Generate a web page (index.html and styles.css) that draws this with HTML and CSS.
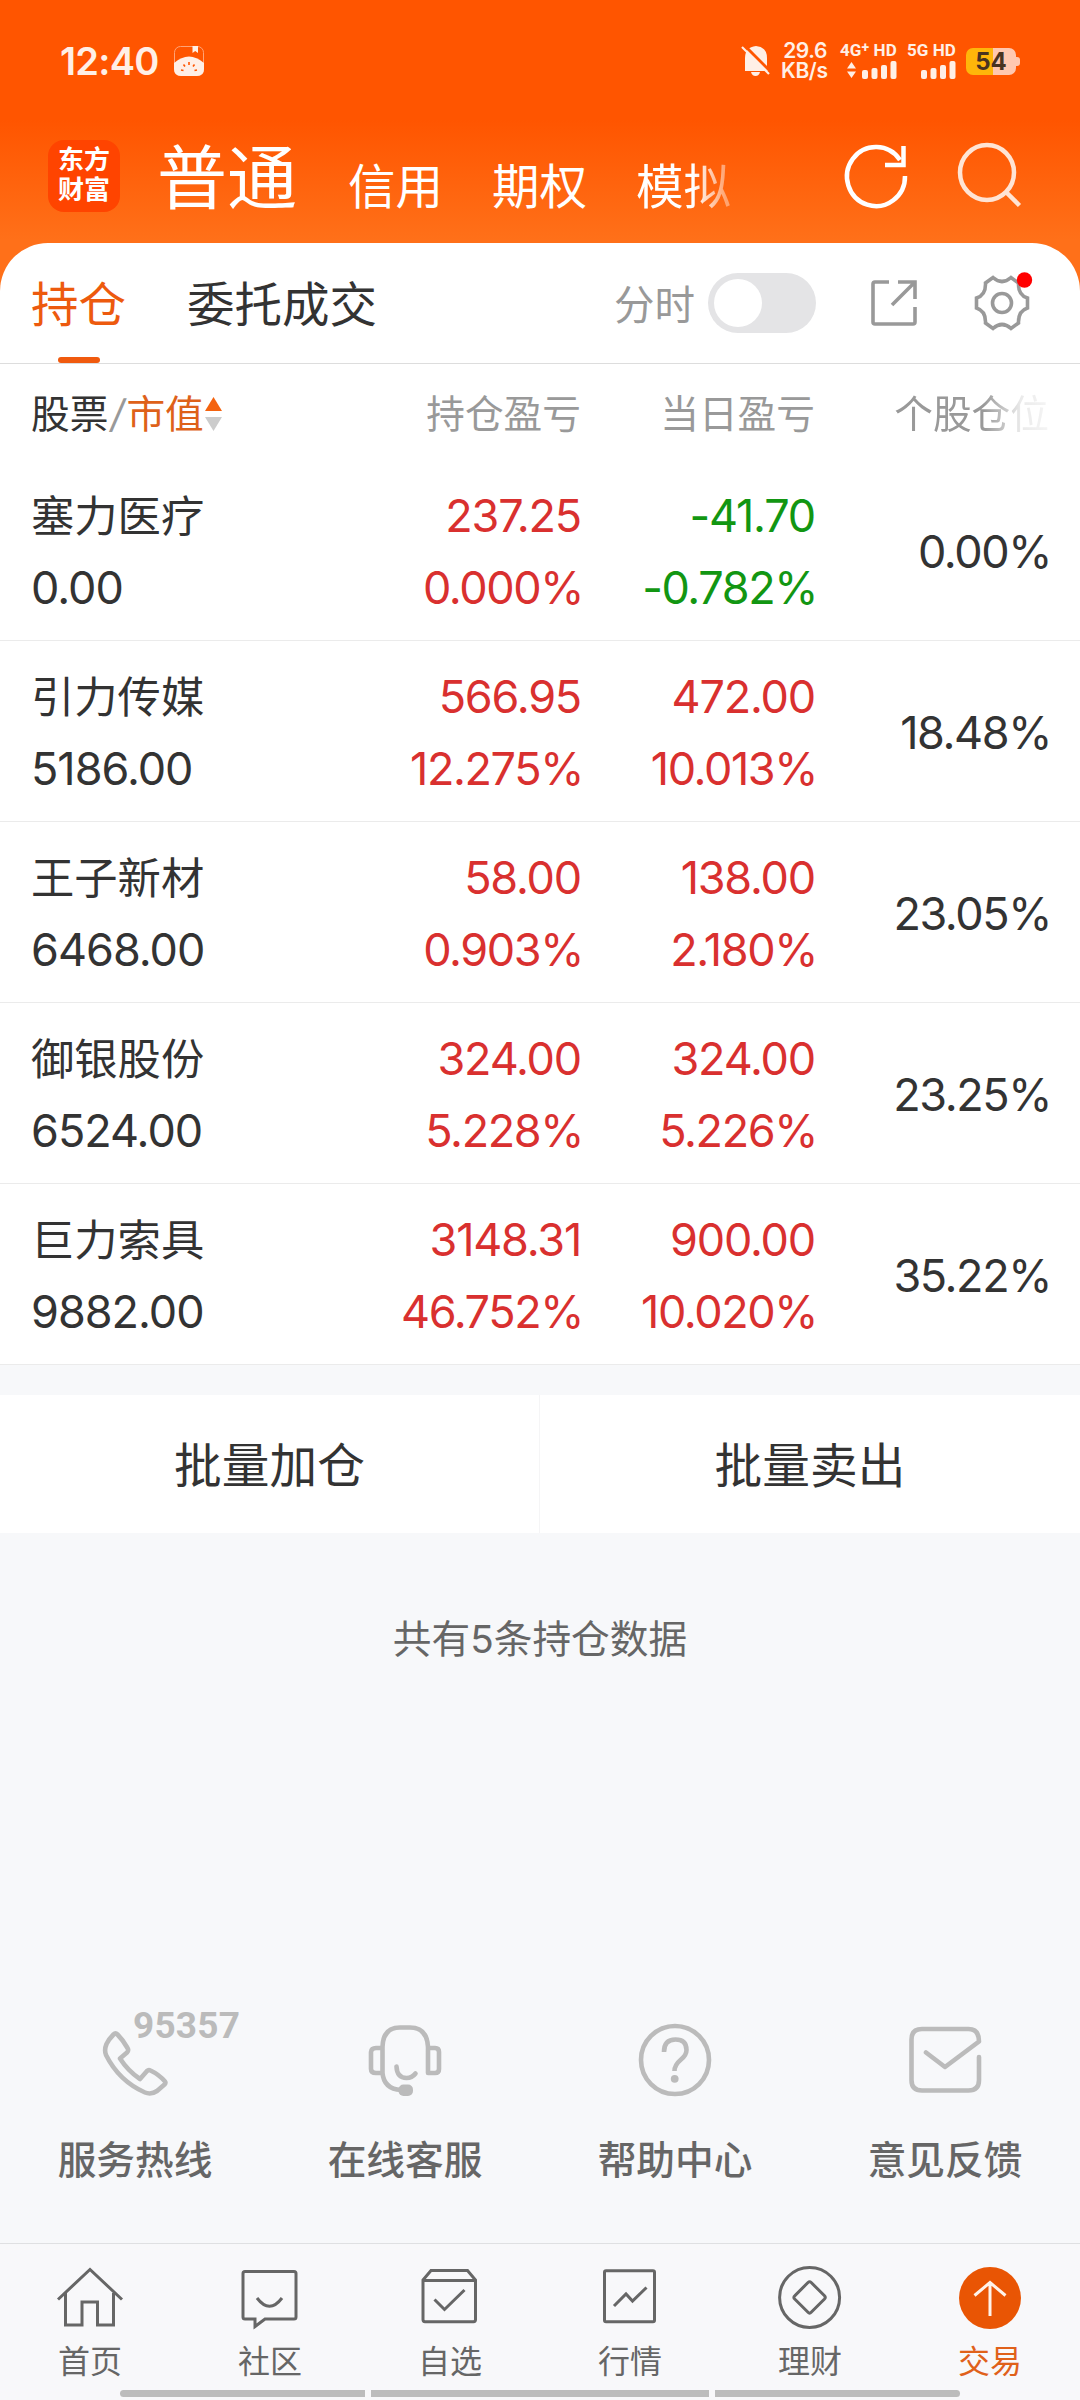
FILE: index.html
```html
<!DOCTYPE html>
<html lang="zh-CN">

<head>
    <meta charset="UTF-8">
    <meta name="viewport" content="width=device-width, initial-scale=1.0">
    <title>交易 - 持仓</title>
    <link rel="stylesheet" href="styles.css">
</head>

<body>
    <header class="header">
        <div class="status">
            <span class="time">12:40</span>
            <svg class="app-icon" width="30" height="30" viewBox="0 0 30 30">
                <rect x=".5" y=".5" width="29" height="29" rx="6" fill="none" stroke="#ffa377" />
                <path d="M0 17Q15 4 30 17V23Q30 30 23 30H7Q0 30 0 23Z" fill="#ffefe6" />
                <path d="M18.500 0H24V7L21.200 5L18.500 7Z" fill="#ffefe6" />
                <path d="M15 16V19M9.500 18.500L11 20.500M20.500 18.500L19 20.500M7 24L9.500 24.500M23 24L20.500 24.500" stroke="#ff5500" stroke-width="1.600" />
            </svg>
            <div class="status-right">
                <svg class="bell" width="28" height="32" viewBox="0 0 28 32">
                    <path d="M3 26V13Q3 2 14 1Q25 2 25 13V22L27 26Z" fill="#ffefe6" />
                    <path d="M9 27H18Q17 31 13.500 31Q10 31 9 27Z" fill="#ffefe6" />
                    <path d="M2 0L29 27" stroke="#ff5500" stroke-width="3" />
                    <path d="M0 2L27 29" stroke="#ffefe6" stroke-width="2.200" />
                </svg>
                <div class="speed">29.6<br>KB/s</div>
                <div class="signal">
                    <span>4G<sup>+</sup> HD</span>
                    <svg width="53" height="18" viewBox="0 0 53 18">
                        <path d="M3 7.500L7.500 1L12 7.500ZM3 10.500L7.500 17L12 10.500Z" />
                        <rect x="18" y="9" width="6" height="9" rx="2" />
                        <rect x="27.500" y="7" width="6" height="11" rx="2" />
                        <rect x="37" y="4" width="6" height="14" rx="2" />
                        <rect x="46.500" y="0" width="6" height="18" rx="2" />
                    </svg>
                </div>
                <div class="signal">
                    <span>5G HD</span>
                    <svg width="35" height="18" viewBox="0 0 35 18">
                        <rect x="0" y="9" width="6" height="9" rx="2" />
                        <rect x="9.500" y="7" width="6" height="11" rx="2" />
                        <rect x="19" y="4" width="6" height="14" rx="2" />
                        <rect x="28.500" y="0" width="6" height="18" rx="2" />
                    </svg>
                </div>
                <div class="battery"><span>54</span></div>
            </div>
        </div>
        <div class="topbar">
            <div class="logo">东方<br>财富</div>
            <nav class="account">
                <a class="on">普通</a>
                <a>信用</a>
                <a>期权</a>
                <a class="fade">模拟</a>
            </nav>
            <svg class="refresh" width="66" height="70" viewBox="0 0 66 70">
                <path d="M62 35A29 29.500 0 1 1 57 19" />
                <path d="M60.500 5V24H42" />
            </svg>
            <svg class="search" width="66" height="70" viewBox="0 0 66 70">
                <ellipse cx="31" cy="31.500" rx="27" ry="27.500" />
                <path d="M49.500 50.500L63.500 64.500" />
            </svg>
        </div>
    </header>

    <main class="panel">
        <div class="tabs">
            <a class="tab on">持仓</a>
            <a class="tab">委托成交</a>
            <div class="tools">
                <span>分时</span>
                <i class="switch"></i>
                <svg class="share" width="48" height="48" viewBox="0 0 48 48">
                    <path d="M19 3H5Q3 3 3 5V43Q3 45 5 45H43Q45 45 45 43V28M28 3H45V20M22 26L45 3" />
                </svg>
                <svg class="gear" width="60" height="60" viewBox="-30 -30 60 60">
                    <path d="M-9 -25.500Q0 -17.500 9 -25.500L16.500 -20Q16 -8 25.500 -5V5Q16 8 16.500 20L9 25.500Q0 17.500 -9 25.500L-16.500 20Q-16 8 -25.500 5V-5Q-16 -8 -16.500 -20Z" />
                    <circle r="9.500" />
                    <circle class="dot" cx="22.500" cy="-23" r="7.700" />
                </svg>
            </div>
        </div>

        <div class="row head">
            <div class="name">股票<em>/</em><b>市值</b><svg width="17" height="36" viewBox="0 0 17 36"><path d="M0 15L8.500 1L17 15Z" fill="#f4630f" /><path d="M0 21L8.500 35L17 21Z" fill="#ccc" /></svg></div>
            <div>持仓盈亏</div>
            <div>当日盈亏</div>
            <div class="fade">个股仓位</div>
        </div>
        <div class="row">
            <div class="name">塞力医疗<span>0.00</span></div>
            <div class="up"><span>237.25</span><span class="rate">0.000%</span></div>
            <div class="down"><span>-41.70</span><span class="rate">-0.782%</span></div>
            <div><span class="rate">0.00%</span></div>
        </div>
        <div class="row">
            <div class="name">引力传媒<span>5186.00</span></div>
            <div class="up"><span>566.95</span><span class="rate">12.275%</span></div>
            <div class="up"><span>472.00</span><span class="rate">10.013%</span></div>
            <div><span class="rate">18.48%</span></div>
        </div>
        <div class="row">
            <div class="name">王子新材<span>6468.00</span></div>
            <div class="up"><span>58.00</span><span class="rate">0.903%</span></div>
            <div class="up"><span>138.00</span><span class="rate">2.180%</span></div>
            <div><span class="rate">23.05%</span></div>
        </div>
        <div class="row">
            <div class="name">御银股份<span>6524.00</span></div>
            <div class="up"><span>324.00</span><span class="rate">5.228%</span></div>
            <div class="up"><span>324.00</span><span class="rate">5.226%</span></div>
            <div><span class="rate">23.25%</span></div>
        </div>
        <div class="row">
            <div class="name">巨力索具<span>9882.00</span></div>
            <div class="up"><span>3148.31</span><span class="rate">46.752%</span></div>
            <div class="up"><span>900.00</span><span class="rate">10.020%</span></div>
            <div><span class="rate">35.22%</span></div>
        </div>
    </main>

    <div class="batch">
        <a>批量加仓</a>
        <a>批量卖出</a>
    </div>
    <p class="total">共有5条持仓数据</p>

    <div class="service">
        <a>
            <svg width="80" height="80" viewBox="0 0 80 80">
                <path d="M18.500 14.500Q20.500 12.500 22.500 14.500Q28 20 32.500 28Q34 30.500 32 32.500L25 38.500Q33 51 45 59L52 51Q53.500 49.500 55.500 50.500Q64 54.500 70 61.500Q71 63 69.500 64.500L62 71Q56 75 50 72.500Q24 61 11 35Q9 30 11.500 24Q14 19 18.500 14.500Z" />
            </svg>
            <strong>95357</strong>
            服务热线
        </a>
        <a>
            <svg width="80" height="80" viewBox="0 0 80 80">
                <path d="M17.500 53V27Q18 7.500 35 7.500H45Q62 7.500 63 27V53H70Q74 53 74 49V32Q74 28 70 28H63M17.500 28H11Q6 28 6 32V49Q6 53 11 53H17.500Q19 69 36 70" />
                <path d="M31.500 46.500Q32 58 41.500 58Q47 58 50.500 53.500" />
                <rect class="fill" x="33.500" y="64.500" width="14.500" height="11.500" rx="5" />
            </svg>
            在线客服
        </a>
        <a>
            <svg width="80" height="80" viewBox="0 0 80 80">
                <circle cx="40" cy="40" r="34" />
                <path class="butt" d="M29 32Q29 19.500 40.500 19.500Q51.500 19.500 51.500 30Q51.500 35 46 39.500Q39.500 45 39.500 51" />
                <circle class="fill" cx="39.700" cy="58.800" r="3.900" />
            </svg>
            帮助中心
        </a>
        <a>
            <svg width="80" height="80" viewBox="0 0 80 80">
                <path d="M74 37V60Q74 70.500 63.500 70.500H17Q6.500 70.500 6.500 60V19.500Q6.500 9 17 9H63.500Q74 9 74 21.500L40 47L21 32.500" />
            </svg>
            意见反馈
        </a>
    </div>

    <footer class="tabbar">
        <a>
            <svg width="80" height="80" viewBox="0 0 80 80">
                <path d="M8 39.500L40 9.500L72 39.500M15.500 33V65H32V42H47.500V65H63.500V33" />
            </svg>
            首页
        </a>
        <a>
            <svg width="80" height="80" viewBox="0 0 80 80">
                <path d="M15 11.500H64Q66 11.500 66 13.500V57Q66 59 64 59H35L25 66.500V59H15Q13 59 13 57V13.500Q13 11.500 15 11.500ZM27 38Q39.500 54.500 52 38" />
            </svg>
            社区
        </a>
        <a>
            <svg width="80" height="80" viewBox="0 0 80 80">
                <path d="M13 20L21 10.500H57.500L65.500 20V59.500Q65.500 61.700 63.500 61.700H15Q13 61.700 13 59.500ZM13 20.500H65.500M24.500 39.500L34.500 49.500L54.500 30" />
            </svg>
            自选
        </a>
        <a>
            <svg width="80" height="80" viewBox="0 0 80 80">
                <rect x="14.500" y="10.700" width="50" height="51" rx="1.500" />
                <path d="M24 46L36 34L42.500 41L56.500 27.500" />
            </svg>
            行情
        </a>
        <a>
            <svg width="80" height="80" viewBox="0 0 80 80">
                <circle cx="39.600" cy="37.400" r="30" />
                <path d="M38 22.500Q39.600 21 41.200 22.500L54.500 35.800Q56 37.400 54.500 39L41.200 52.300Q39.600 54 38 52.300L24.700 39Q23 37.400 24.700 35.800Z" />
            </svg>
            理财
        </a>
        <a class="on">
            <svg width="80" height="80" viewBox="0 0 80 80">
                <circle class="disc" cx="40" cy="38" r="31" />
                <path d="M40 56V22M24.500 35.500L40 22.500L55.500 35.500" />
            </svg>
            交易
        </a>
        <div class="handle"><i></i><i></i><i></i></div>
    </footer>
</body>

</html>
```

FILE: styles.css
```css
* {
    box-sizing: border-box;
}

body {
    display: flex;
    flex-direction: column;
    margin: 0;
    width: 1080px;
    height: 2400px;
    overflow: hidden;
    font-family: Inter, "Noto Sans CJK SC", sans-serif;
    color: #333;
    background-color: #f7f8fa;
}

svg {
    display: block;
    flex: none;
    overflow: visible;
    fill: none;
}

/* header */
.header {
    height: 300px;
    flex: none;
    background: linear-gradient(#ff5500 0, #ff5500 120px, #ff7019 240px);
}

.status {
    display: flex;
    align-items: center;
    height: 122px;
    padding: 0 60px;
    color: #ffefe6;
}

.time {
    width: 114px;
    font-size: 38px;
    font-weight: 600;
    letter-spacing: -0.7px;
    white-space: nowrap;
}

.status-right {
    display: flex;
    align-items: center;
    margin-left: auto;
}

.speed {
    width: 46px;
    margin: 0 13px 0 11px;
    font-size: 21px;
    font-weight: 600;
    line-height: 20px;
    letter-spacing: -0.4px;
    text-align: right;
    white-space: nowrap;
}

.signal {
    display: flex;
    flex-direction: column;
    align-items: flex-end;
    gap: 3px;
    margin-right: 10px;
    font-family: Roboto, sans-serif;
    font-size: 17px;
    font-weight: 700;
    line-height: 15px;
    letter-spacing: 0.1px;
    white-space: nowrap;
}

.signal sup {
    font-size: 14px;
    line-height: 0;
    vertical-align: 4px;
}

.signal svg {
    fill: #ffefe6;
}

.battery {
    position: relative;
    width: 50px;
    height: 27px;
    margin-right: 4px;
    border-radius: 7px;
    font-size: 24px;
    font-weight: 700;
    line-height: 27px;
    text-align: center;
    color: #4a3320;
    background: linear-gradient(90deg, #ffb60a 54%, #ffc8b0 54%);
}

.battery::after {
    content: "";
    position: absolute;
    right: -4px;
    top: 9px;
    width: 4px;
    height: 9px;
    border-radius: 0 3px 3px 0;
    background-color: #ffc8b0;
}

.topbar {
    display: flex;
    align-items: center;
    height: 107px;
    padding: 0 58px 0 48px;
}

.logo {
    width: 72px;
    height: 72px;
    padding-top: 5px;
    border-radius: 16px;
    font-size: 26px;
    font-weight: 700;
    line-height: 30px;
    text-align: center;
    color: #fff;
    background-color: #ff4400;
}

.account {
    display: flex;
    align-items: baseline;
    gap: 49px;
    margin-left: 37px;
    padding-top: 15px;
    font-size: 47.5px;
    line-height: 80px;
    color: #fff;
}

.account .on {
    margin-right: 2px;
    font-size: 70px;
}

.account .fade {
    -webkit-mask-image: linear-gradient(90deg, #000 60%, rgba(0, 0, 0, .4) 95%);
    mask-image: linear-gradient(90deg, #000 60%, rgba(0, 0, 0, .4) 95%);
}

.refresh,
.search {
    stroke: #fff;
    stroke-width: 4.5;
}

.refresh {
    margin-left: auto;
}

.search {
    margin-left: 47px;
    stroke: #ffe4d4;
}

/* holdings */
.panel {
    flex: none;
    height: 1122px;
    margin-top: -57px;
    border-radius: 48px 48px 0 0;
    background-color: #fff;
}

.tabs {
    display: flex;
    height: 121px;
    padding: 0 48px 0 31px;
    border-bottom: 1px solid #ddd;
}

.tab {
    display: flex;
    flex-direction: column;
    align-items: center;
    margin-right: 61px;
    font-size: 47.5px;
    line-height: 124px;
}

.tab.on {
    color: #ed5a0e;
}

.tab.on::after {
    content: "";
    width: 42px;
    height: 6px;
    margin-top: -10px;
    border-radius: 3px;
    background-color: #f05a0e;
}

.tools {
    display: flex;
    align-items: center;
    margin-left: auto;
    font-size: 40.5px;
    color: #999;
}

.tools span {
    margin-top: -2px;
}

.switch {
    width: 108px;
    height: 60px;
    margin-left: 13px;
    padding: 6px;
    border-radius: 30px;
    background-color: #e4e4e6;
}

.switch::before {
    content: "";
    display: block;
    width: 48px;
    height: 48px;
    border-radius: 50%;
    background-color: #fff;
}

.share,
.gear {
    stroke: #999;
    stroke-width: 3.6;
}

.share {
    margin-left: 54px;
}

.gear {
    margin-left: 54px;
}

.gear .dot {
    stroke: none;
    fill: #f00;
}

.row {
    display: grid;
    grid-template-columns: 300px 250px 234px 234px;
    align-items: center;
    height: 181px;
    padding: 4px 31px 0;
    border-bottom: 1px solid #ebebeb;
    font-size: 45px;
    line-height: 72px;
    letter-spacing: -1.2px;
    text-align: right;
}

.row span {
    display: block;
}

.row .rate {
    margin-right: -2px;
    letter-spacing: -1.4px;
}

.row .name {
    font-size: 43.3px;
    letter-spacing: 0;
    text-align: left;
}

.row .name span {
    font-size: 45px;
    letter-spacing: -1px;
}

.row.head {
    height: 96px;
    padding-top: 3px;
    border-bottom: 0;
    font-size: 38.7px;
    letter-spacing: 0;
    color: #999;
}

.row.head .name {
    display: flex;
    align-items: center;
    font-size: 38.7px;
    color: #333;
}

.row em {
    width: 18px;
    text-align: center;
    color: #999;
}

.row b {
    margin-right: 1px;
    font-weight: 400;
    color: #de6119;
}

.row .fade {
    -webkit-mask-image: linear-gradient(90deg, #000 72%, rgba(0, 0, 0, .2) 88%, rgba(0, 0, 0, .1));
    mask-image: linear-gradient(90deg, #000 72%, rgba(0, 0, 0, .2) 88%, rgba(0, 0, 0, .1));
}

.up {
    color: #d9302f;
}

.down {
    color: #129612;
}

/* batch buttons */
.batch {
    display: flex;
    flex: none;
    height: 138px;
    margin-top: 30px;
    background-color: #fff;
}

.batch a {
    width: 539px;
    font-size: 47.7px;
    line-height: 142px;
    text-align: center;
}

.batch a + a {
    flex: 1;
    border-left: 1px solid #f5f5f6;
}

.total {
    margin: 76px 0 0;
    font-size: 38.7px;
    line-height: 60px;
    text-align: center;
    color: #666;
}

/* service links */
.service {
    display: flex;
    margin-top: auto;
    padding-bottom: 53px;
}

.service a {
    position: relative;
    display: flex;
    flex-direction: column;
    align-items: center;
    gap: 30px;
    flex: 1;
    font-size: 38.7px;
    font-weight: 500;
    line-height: 60px;
    color: #666;
}

.service svg {
    stroke: #bbb;
    stroke-width: 4.6;
    stroke-linecap: round;
    stroke-linejoin: round;
}

.service .butt {
    stroke-linecap: butt;
}

.service .fill {
    stroke: none;
    fill: #bbb;
}

.service strong {
    position: absolute;
    left: 133px;
    top: -14px;
    font-family: Roboto, sans-serif;
    font-size: 37px;
    line-height: 40px;
    letter-spacing: 0.2px;
    color: #bbb;
}

/* bottom tab bar */
.tabbar {
    position: relative;
    display: flex;
    flex: none;
    height: 157px;
    padding-top: 16px;
    border-top: 1px solid #dfe0e2;
    background-color: #f8f8fa;
}

.tabbar a {
    display: flex;
    flex-direction: column;
    align-items: center;
    flex: 1;
    font-size: 32px;
    line-height: 44px;
    color: #666;
}

.tabbar svg {
    stroke: #666;
    stroke-width: 3;
}

.tabbar .on {
    color: #e0611a;
}

.tabbar .on svg {
    stroke: #fff3ea;
}

.tabbar .disc {
    stroke: none;
    fill: #e95504;
}

.handle {
    position: absolute;
    left: 120px;
    bottom: 3px;
    display: flex;
    gap: 6px;
    width: 840px;
    height: 7px;
}

.handle i {
    flex: 245;
    border-radius: 4px 0 0 4px;
    background-color: #bcbcbc;
}

.handle i:nth-child(2) {
    flex: 338;
    border-radius: 0;
}

.handle i:last-child {
    border-radius: 0 4px 4px 0;
}
```
